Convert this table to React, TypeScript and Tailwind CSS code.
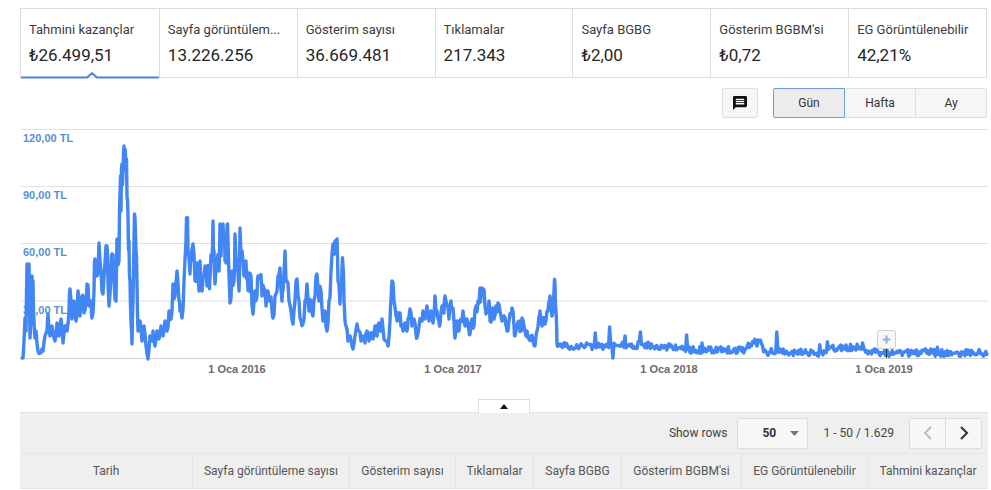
import React from "react";

const EARLY: [number, number][] = [
  [22,357],[23,357],[24,340],[25,317],[26,330],[27,263],[28,265],[29,263],[30,337],[31,320],[32,275],[33,280],[34,320],[35,337],[36,330],[38,350],[40,352],[42,348],[43,350],[45,335],[47,330],[48,313],[50,335],[52,325],[53,330],[55,340],[57,322],[59,335],[61,318],[63,342],[65,325],[67,330],[69,310],[70,288],[72,318],[74,300],[76,320],[78,290],[80,315],[82,295],[84,312],[86,300],[87,283],[89,305],[91,300],[92,317],[94,290],[95,258],[97,275],[99,242],[101,270],[103,293],[105,262],[107,245],[108,280],[109,305],[111,270],[112,253],[114,280],[116,300],[117,238],[119,260],[120,193],[121,210],[122,163],[123,170],[124,145],[125,148],[126,170],[127,197],[128,215],[129,240],[130,280],[131,320],[132,343],[133,300],[134,240],[135,217],[136,250],[137,283],[138,330],[140,320],[142,340],[144,325],[146,345],[148,358],[150,335],[152,340],[153,330],[155,345],[157,330],[159,338],[161,325],[163,335],[165,320],[167,330],[169,310],[171,318],[173,283],[175,295],[177,270],[179,300],[180,310],[182,317],[184,280],[186,240],[187,223],[188,250],[190,273],[191,260],[193,243],[195,280],[197,262],[199,290],[200,260],[202,290],[203,277],[205,265],[207,285],[209,270],[210,277],[212,260],[213,220],[214,250],[215,283],[217,262],[219,270],[220,223],[221,255],[222,240],[223,223],[224,240],[225,260],[226,262],[227,225],[228,240],[230,302],[232,270],[234,280],[235,233],[237,260],[239,290],[240,227],[242,250],[244,275],[246,260],[247,270],[249,290],[251,275],[253,313],[255,290],[257,295],[258,275],[260,277],[262,295],[264,288],[266,305],[268,290],[270,300],[272,310],[273,317],[275,295],[277,290],[278,275],[280,267],[282,300],[283,290],[285,250],[287,280],[289,300],[291,310],[293,323],[295,300],[297,278],[299,300],[301,320],[303,323],[305,300],[307,283],[309,310],[311,300],[313,315],[315,295],[317,273],[319,300],[321,290],[323,320],[325,310],[327,330],[329,300],[331,270],[333,243],[335,240],[337,238],[338,280],[340,303],[341,290],[342,268],[343,267],[344,300],[345,320],[346,325],[348,340],[350,335],[352,345],[353,348],[355,335],[357,323],[359,330],[361,340],[363,335],[365,342],[367,330],[369,340],[371,332],[373,338],[375,325],[377,335],[379,322],[381,330],[382,318],[384,338],[386,340],[388,345],[390,320],[391,300],[392,280],[394,300],[396,315],[397,320],[399,312],[401,325],[403,330],[405,322],[407,330],[408,318],[410,308],[412,325],[414,318],[416,333],[417,337],[419,325],[421,320],[423,310],[425,318],[427,305],[429,320],[431,310],[433,322],[435,295],[437,310],[439,320],[440,323],[442,305],[444,312],[445,295],[447,305],[449,318],[451,300],[452,307],[454,320],[455,337],[457,320],[459,330],[461,318],[463,310],[465,325],[467,318],[469,330],[470,333],[472,318],[474,325],[476,305],[478,300],[480,287],[481,295],[483,288],[485,305],[487,310],[489,300],[490,320],[492,310],[494,318],[496,305],[498,302],[500,310],[502,320],[504,315],[506,325],[507,330],[509,320],[511,312],[512,307],[514,325],[515,335],[517,325],[519,320],[521,330],[522,317],[524,325],[526,335],[527,330],[529,338],[531,335],[533,340],[535,345],[537,330],[539,315],[540,310],[542,325],[544,320],[545,323],[547,310],[549,300],[550,295],[552,315],[554,290],[555,283],[556,310],[557,343],[558,345],
];

const FLAT_BASE: [number, number][] = [
  [558,345],[600,345],[640,344],[660,346],[680,346],[690,349],[745,349],[752,341],[760,342],[766,351],[825,352],[830,347],[860,346],[866,349],[872,352],[988,352],
];

const SPIKES: Record<number, number> = {
  595: 332, 610: 326, 613: 357, 625: 335, 640: 331, 687: 334, 702: 342, 777: 331, 863: 342,
};

function mulberry32(a: number) {
  return function () {
    a |= 0;
    a = (a + 0x6d2b79f5) | 0;
    let t = Math.imul(a ^ (a >>> 15), 1 | a);
    t = (t + Math.imul(t ^ (t >>> 7), 61 | t)) ^ t;
    return ((t ^ (t >>> 14)) >>> 0) / 4294967296;
  };
}

function interp(pts: [number, number][], x: number) {
  for (let i = 0; i < pts.length - 1; i++) {
    const [x0, y0] = pts[i];
    const [x1, y1] = pts[i + 1];
    if (x >= x0 && x <= x1) return y0 + ((y1 - y0) * (x - x0)) / (x1 - x0);
  }
  return pts[pts.length - 1][1];
}

function buildPath() {
  const rand = mulberry32(12345);
  const pts: [number, number][] = [];
  for (let i = 0; i < EARLY.length; i++) {
    const p = EARLY[i];
    pts.push(p);
    const q = EARLY[i + 1];
    if (q && i > 2) {
      const mx = (p[0] + q[0]) / 2;
      const my = (p[1] + q[1]) / 2;
      const amp = Math.max(4, (357 - my) * 0.35);
      pts.push([mx, Math.min(357, my + (rand() - 0.5) * amp)]);
    }
  }
  const spikeXs = Object.keys(SPIKES).map(Number);
  for (let x = 559; x <= 987.5; x += 1.1) {
    const base = interp(FLAT_BASE, x);
    let y = base + (rand() - 0.5) * 7;
    if (rand() < 0.06) y -= rand() * 7;
    const sp = spikeXs.find((s) => Math.abs(s - x) < 0.55);
    if (sp !== undefined) y = SPIKES[sp];
    pts.push([x, Math.min(357, y)]);
  }
  return pts.map((p, i) => `${i === 0 ? "M" : "L"}${p[0].toFixed(1)} ${p[1].toFixed(1)}`).join(" ");
}

const PATH = buildPath();

const tabs = [
  { label: "Tahmini kazançlar", value: "₺26.499,51" },
  { label: "Sayfa görüntülem...", value: "13.226.256" },
  { label: "Gösterim sayısı", value: "36.669.481" },
  { label: "Tıklamalar", value: "217.343" },
  { label: "Sayfa BGBG", value: "₺2,00" },
  { label: "Gösterim BGBM'si", value: "₺0,72" },
  { label: "EG Görüntülenebilir", value: "42,21%" },
];

const columns = [
  { name: "Tarih", w: "w-[172px]" },
  { name: "Sayfa görüntüleme sayısı", w: "w-[157px]" },
  { name: "Gösterim sayısı", w: "w-[106px]" },
  { name: "Tıklamalar", w: "w-[78px]" },
  { name: "Sayfa BGBG", w: "w-[88px]" },
  { name: "Gösterim BGBM'si", w: "w-[120px]" },
  { name: "EG Görüntülenebilir", w: "w-[126px]" },
  { name: "Tahmini kazançlar", w: "w-[121px]" },
];

const grid = [128.5, 185.5, 242.5, 300];
const yLabels = ["120,00 TL", "90,00 TL", "60,00 TL", "30,00 TL"];
const xLabels: [number, string][] = [
  [237, "1 Oca 2016"],
  [453, "1 Oca 2017"],
  [669, "1 Oca 2018"],
  [884, "1 Oca 2019"],
];

export default function App() {
  return (
    <div className="w-[991px] h-[490px] overflow-hidden bg-white pt-[8px] font-['Roboto','Liberation_Sans',sans-serif]">
      {/* Metric tabs */}
      <div className="ml-[20px] w-[967px] h-[70px] grid grid-cols-7 border border-[#dcdcdc]">
        {tabs.map((t, i) => (
          <div
            key={t.label}
            className={`relative pl-[8px] pt-[13px] ${i > 0 ? "border-l border-[#dcdcdc]" : ""}`}
          >
            <div className="text-[13px] leading-4 text-[#3c3c3c] whitespace-nowrap">{t.label}</div>
            <div className="mt-[7px] text-[17px] leading-5 text-[#262626] whitespace-nowrap">{t.value}</div>
            {i === 0 && (
              <svg className="absolute left-0 bottom-[-2px]" width="138" height="7" viewBox="0 0 138 7">
                <polyline
                  points="0,5.5 66,5.5 71,1.2 76,5.5 138,5.5"
                  fill="none"
                  stroke="#4a86d8"
                  strokeWidth="2"
                />
              </svg>
            )}
          </div>
        ))}
      </div>

      {/* Controls */}
      <div className="mt-[10px] flex justify-end pr-[4px] h-[30px]">
        <button className="w-[36px] h-[30px] flex items-center justify-center rounded-[2px] border border-[#dedede] bg-[#f6f6f6]">
          <svg width="14" height="14" viewBox="2 2 20 20">
            <path
              d="M20 2H4c-1.1 0-2 .9-2 2v18l4-4h14c1.1 0 2-.9 2-2V4c0-1.1-.9-2-2-2zm-2 12H6v-2h12v2zm0-3H6V9h12v2zm0-3H6V6h12v2z"
              fill="#111"
            />
          </svg>
        </button>
        <div className="ml-[15px] flex h-[30px]">
          <button className="w-[72px] h-[30px] text-[12px] text-[#333] bg-[#ececec] border border-[#6d9fd6] rounded-l-[2px]">
            Gün
          </button>
          <button className="w-[71px] h-[30px] text-[12px] text-[#333] bg-[#f6f6f6] border-y border-r border-[#dedede]">
            Hafta
          </button>
          <button className="w-[71px] h-[30px] text-[12px] text-[#333] bg-[#f6f6f6] border-y border-r border-[#dedede] rounded-r-[2px]">
            Ay
          </button>
        </div>
      </div>

      {/* Chart */}
      <svg width="991" height="265" viewBox="0 120 991 265" className="mt-[3px] block">
        {grid.map((y) => (
          <line key={y} x1="21" x2="988" y1={y} y2={y} stroke="#e0e0e0" strokeWidth="1" />
        ))}
        <line x1="21" x2="988" y1="357.5" y2="357.5" stroke="#cfcfcf" strokeWidth="1" />
        {yLabels.map((l, i) => (
          <text
            key={l}
            x="23"
            y={grid[i] + 12.5}
            fontFamily="'Liberation Sans', Arial, sans-serif"
            fontSize="11"
            fontWeight="bold"
            fill="#5b8ed6"
          >
            {l}
          </text>
        ))}
        <path d={PATH} fill="none" stroke="#4285f4" strokeWidth="3.4" strokeLinejoin="round" strokeLinecap="round" />
        {xLabels.map(([x, l]) => (
          <text
            key={l}
            x={x}
            y="372"
            textAnchor="middle"
            fontFamily="'Liberation Sans', Arial, sans-serif"
            fontSize="11"
            fontWeight="bold"
            fill="#6a6a6a"
          >
            {l}
          </text>
        ))}
        <line x1="886.5" x2="886.5" y1="348" y2="357" stroke="#333" strokeWidth="1" />
        <rect x="877.5" y="329.5" width="18" height="18" rx="2" fill="#f7f7f7" stroke="#d0d0d0" />
        <path d="M886.5 334.5v8M882.5 338.5h8" stroke="#93b4dc" strokeWidth="2.2" />
      </svg>

      {/* Collapse tab */}
      <div className="mt-[13px] ml-[478px] w-[52px] h-[14px] bg-white border-x border-t border-[#dcdcdc] flex items-center justify-center relative z-10 mb-[-1px]">
        <svg width="8" height="5" viewBox="0 0 8 5">
          <path d="M0 5 L4 0 L8 5 Z" fill="#111" />
        </svg>
      </div>

      {/* Table */}
      <div className="ml-[20px] w-[968px] bg-[#efefef] border-t border-[#e2e2e2]">
        <div className="h-[40px] flex items-center justify-end pr-[6px] text-[12px] text-[#444]">
          <span>Show rows</span>
          <div className="ml-[10px] w-[71px] h-[31px] bg-[#f7f7f7] border border-[#dcdcdc] rounded-[2px] flex items-center pl-[24px] pr-[8px]">
            <span className="font-bold text-[#333]">50</span>
            <svg className="ml-auto" width="9" height="5" viewBox="0 0 9 5">
              <path d="M0 0 L9 0 L4.5 5 Z" fill="#777" />
            </svg>
          </div>
          <span className="ml-[15px]">1 - 50 / 1.629</span>
          <div className="ml-[15px] flex h-[31px] border border-[#dcdcdc] rounded-[2px] bg-[#f7f7f7]">
            <button className="w-[36px] h-full flex items-center justify-center border-r border-[#dcdcdc]">
              <svg width="10" height="14" viewBox="0 0 10 14">
                <path d="M8 1 L2 7 L8 13" fill="none" stroke="#bbb" strokeWidth="2" />
              </svg>
            </button>
            <button className="w-[35px] h-full flex items-center justify-center">
              <svg width="10" height="14" viewBox="0 0 10 14">
                <path d="M2 1 L8 7 L2 13" fill="none" stroke="#333" strokeWidth="2" />
              </svg>
            </button>
          </div>
        </div>
        <div className="flex h-[36px] border-t border-[#e6e6e6] border-b border-b-[#e2e2e2]">
          {columns.map((c, i) => (
            <div
              key={c.name}
              className={`${c.w} flex items-center justify-center text-[12px] text-[#555] whitespace-nowrap ${
                i > 0 ? "border-l border-[#e4e4e4]" : ""
              }`}
            >
              {c.name}
            </div>
          ))}
        </div>
      </div>
    </div>
  );
}
